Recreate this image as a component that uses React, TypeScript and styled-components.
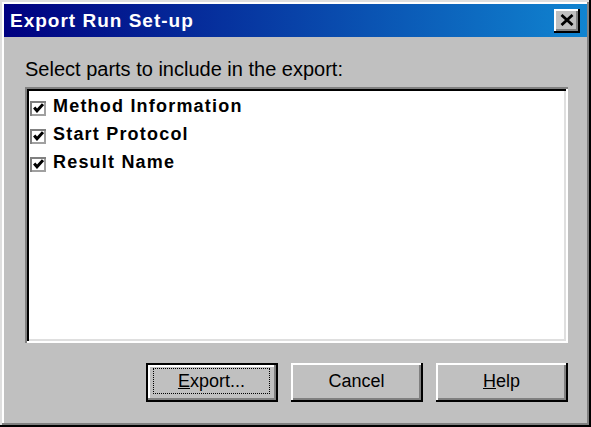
import React from "react";
import styled, { createGlobalStyle } from "styled-components";

const Global = createGlobalStyle`
  html, body { margin: 0; padding: 0; background: #c0c0c0; }
  body { font-family: "Liberation Sans", Arial, sans-serif; }
`;

const Window = styled.div`
  box-sizing: border-box;
  width: 591px;
  height: 427px;
  background: #c0c0c0;
  padding: 4px;
  display: flex;
  flex-direction: column;
  box-shadow:
    inset -2px -2px #000,
    inset 2px 2px #dfdfdf,
    inset -4px -4px #808080,
    inset 4px 4px #fff;
`;

const TitleBar = styled.div`
  height: 33px;
  flex: none;
  display: flex;
  align-items: center;
  justify-content: space-between;
  padding: 0 7px 0 6px;
  background: linear-gradient(to right, #000080, #1084d0);
`;

const Title = styled.div`
  color: #fff;
  font-weight: bold;
  font-size: 19px;
  letter-spacing: 1px;
  white-space: nowrap;
`;

const CloseButton = styled.button`
  width: 26px;
  height: 24px;
  padding: 0;
  border: none;
  background: #c0c0c0;
  display: flex;
  align-items: center;
  justify-content: center;
  box-shadow:
    inset -2px -2px #000,
    inset 2px 2px #fff,
    inset -4px -4px #808080;
  svg { margin: -2px 0 0 -1px; }
`;

const Body = styled.div`
  flex: 1;
  display: flex;
  flex-direction: column;
  padding: 21px 19px 21px 21px;
`;

const Label = styled.div`
  font-size: 20px;
  line-height: 23px;
  color: #000;
  white-space: nowrap;
`;

const ListBox = styled.div`
  margin-top: 6px;
  height: 256px;
  box-sizing: border-box;
  background: #fff;
  padding: 7px 2px 4px 5px;
  display: flex;
  flex-direction: column;
  box-shadow:
    inset 2px 2px #808080,
    inset -2px -2px #fff,
    inset 4px 4px #000,
    inset -4px -4px #dfdfdf;
`;

const Row = styled.div`
  height: 28px;
  display: flex;
  align-items: center;
  gap: 7px;
`;

const CheckBox = styled.span`
  width: 16px;
  height: 15px;
  box-sizing: border-box;
  flex: none;
  background: #fff;
  display: flex;
  align-items: center;
  justify-content: center;
  box-shadow:
    inset 2px 2px #808080,
    inset -2px -2px #a0a0a0;
`;

const ItemText = styled.span`
  font-size: 18px;
  font-weight: bold;
  letter-spacing: 1.2px;
  color: #000;
  margin-bottom: 4px;
  white-space: nowrap;
`;

const Buttons = styled.div`
  margin-top: 20px;
  display: flex;
  justify-content: flex-end;
  gap: 13px;
`;

const Button = styled.button<{ $default?: boolean }>`
  width: 132px;
  height: 39px;
  box-sizing: border-box;
  border: ${(p) => (p.$default ? "2px solid #000" : "none")};
  background: #c0c0c0;
  padding: ${(p) => (p.$default ? "3px 6px 6px 5px" : "5px 8px 8px 7px")};
  display: flex;
  font-family: "Liberation Sans", Arial, sans-serif;
  font-size: 18px;
  color: #000;
  box-shadow: ${(p) =>
    p.$default
      ? "inset -2px -2px #808080, inset 2px 2px #fff"
      : "inset -2px -2px #000, inset 2px 2px #fff, inset -4px -4px #808080"};
`;

const Focus = styled.span<{ $show?: boolean }>`
  flex: 1;
  display: flex;
  align-items: center;
  justify-content: center;
  border: 1px dotted ${(p) => (p.$show ? "#000" : "transparent")};
`;

const Check = () => (
  <svg width="11" height="10" viewBox="0 0 11 10">
    <polyline points="1.2,4.5 4,7.8 10,1.2" fill="none" stroke="#000" strokeWidth="3" />
  </svg>
);

const items = ["Method Information", "Start Protocol", "Result Name"];

export default function App() {
  return (
    <>
      <Global />
      <Window>
        <TitleBar>
          <Title>Export Run Set-up</Title>
          <CloseButton aria-label="Close">
            <svg width="14" height="12" viewBox="0 0 14 12">
              <path d="M1.5 1 L12.5 11 M12.5 1 L1.5 11" stroke="#000" strokeWidth="2.8" />
            </svg>
          </CloseButton>
        </TitleBar>
        <Body>
          <Label>Select parts to include in the export:</Label>
          <ListBox>
            {items.map((t) => (
              <Row key={t}>
                <CheckBox>
                  <Check />
                </CheckBox>
                <ItemText>{t}</ItemText>
              </Row>
            ))}
          </ListBox>
          <Buttons>
            <Button $default>
              <Focus $show>
                <span><u>E</u>xport...</span>
              </Focus>
            </Button>
            <Button>
              <Focus>Cancel</Focus>
            </Button>
            <Button>
              <Focus>
                <span><u>H</u>elp</span>
              </Focus>
            </Button>
          </Buttons>
        </Body>
      </Window>
    </>
  );
}
